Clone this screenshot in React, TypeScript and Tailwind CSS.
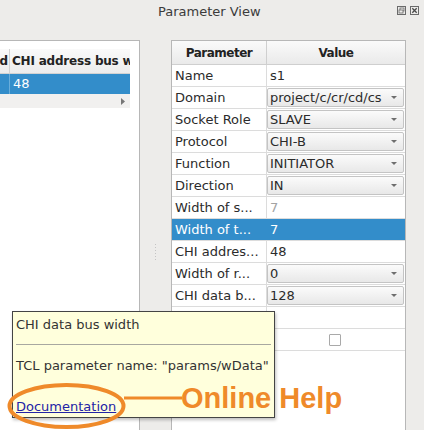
import React from 'react';

type Row = {
  name: string;
  value: string;
  combo?: boolean;
  disabled?: boolean;
  selected?: boolean;
  check?: boolean;
};

const rows: Row[] = [
  { name: 'Name', value: 's1' },
  { name: 'Domain', value: 'project/c/cr/cd/cs', combo: true },
  { name: 'Socket Role', value: 'SLAVE', combo: true },
  { name: 'Protocol', value: 'CHI-B', combo: true },
  { name: 'Function', value: 'INITIATOR', combo: true },
  { name: 'Direction', value: 'IN', combo: true },
  { name: 'Width of s...', value: '7', disabled: true },
  { name: 'Width of t...', value: '7', selected: true },
  { name: 'CHI addres...', value: '48' },
  { name: 'Width of r...', value: '0', combo: true },
  { name: 'CHI data b...', value: '128', combo: true },
  { name: '', value: '' },
  { name: '', value: '', check: true },
];

function DownArrow() {
  return (
    <svg width="6" height="3" viewBox="0 0 6 3" className="shrink-0">
      <path d="M0 0 L6 0 L3 3 Z" fill="#6e6e6e" />
    </svg>
  );
}

function ValueCell({ row }: { row: Row }) {
  if (row.combo) {
    return (
      <div className="flex h-full items-center py-[1px] pr-[1px]">
        <div className="flex h-full w-full items-center justify-between rounded-[2px] border border-[#c4c4c4] bg-gradient-to-b from-[#fbfbfb] to-[#e8e8e8] pl-[2px] pr-[6px]">
          <span className="whitespace-nowrap">{row.value}</span>
          <DownArrow />
        </div>
      </div>
    );
  }
  if (row.check) {
    return (
      <div className="flex h-full items-center justify-center pr-[2px]">
        <div className="h-[12px] w-[12px] rounded-[1px] border border-[#a9a9a9] bg-white" />
      </div>
    );
  }
  return (
    <div className={`flex h-full items-center pl-[3px] ${row.disabled ? 'text-[#a3a3a3]' : ''}`}>
      {row.value}
    </div>
  );
}

export default function App() {
  return (
    <div className="relative h-[430px] w-[424px] overflow-hidden bg-[#edecea] font-['DejaVu_Sans',sans-serif] text-[13px] text-[#2b2b2b]">
      {/* title bar */}
      <div className="flex h-[40px] items-start pt-[4px]">
        <div className="ml-[158px] leading-[16px] text-[#3b3b3b]">Parameter View</div>
        <div className="ml-auto mr-[5px] mt-[2px] flex gap-[4px]">
          <svg width="9" height="9" viewBox="0 0 9 9">
            <rect x="0.5" y="0.5" width="8" height="8" fill="none" stroke="#6a6a6a" />
            <rect x="3" y="2" width="4" height="3" fill="none" stroke="#6a6a6a" strokeWidth="0.8" />
            <rect x="2" y="4" width="4" height="3" fill="#edecea" stroke="#6a6a6a" strokeWidth="0.8" />
          </svg>
          <svg width="9" height="9" viewBox="0 0 9 9">
            <rect x="0.5" y="0.5" width="8" height="8" fill="none" stroke="#6a6a6a" />
            <path d="M2.3 2.3 L6.7 6.7 M6.7 2.3 L2.3 6.7" stroke="#4a4a4a" strokeWidth="1.3" />
          </svg>
        </div>
      </div>

      <div className="flex h-[390px]">
        {/* left panel */}
        <div className="w-[140px] border-t border-r border-[#b7b7b7] bg-white pt-[8px]">
          <div className="w-[130px] overflow-hidden">
            <div className="flex h-[25px] border-b border-[#d2d2d2] bg-gradient-to-b from-[#fafafa] to-[#ececec] font-bold text-[12px] tracking-[-0.2px] text-[#222]">
              <div className="flex w-[10px] shrink-0 items-center justify-end overflow-hidden border-r border-[#d2d2d2] pr-[1px]">d</div>
              <div className="flex items-center whitespace-nowrap pl-[2px]">CHI address bus width</div>
            </div>
            <div className="flex h-[20px] bg-[#338dca] text-white">
              <div className="w-[10px] shrink-0 border-r border-[#6aaedb]" />
              <div className="flex items-center pl-[3px]">48</div>
            </div>
            <div className="flex h-[14px] items-center justify-end bg-[#f1f0ef] pr-[5px]">
              <svg width="4" height="7" viewBox="0 0 4 7">
                <path d="M0 0 L4 3.5 L0 7 Z" fill="#777" />
              </svg>
            </div>
          </div>
        </div>

        {/* splitter */}
        <div className="flex w-[31px] flex-col items-center gap-[2px] pt-[204px]">
          {Array.from({ length: 6 }).map((_, i) => (
            <div key={i} className="h-[1px] w-[1px] bg-[#c4c4c4]" />
          ))}
        </div>

        {/* right panel */}
        <div className="w-[235px] border-t border-x border-[#b7b7b7] bg-white">
          <div className="flex h-[24px] border-b border-[#cfcfcf] bg-gradient-to-b from-[#fafafa] to-[#eaeaea] font-bold text-[12px] tracking-[-0.5px] text-[#222]">
            <div className="flex w-[95px] items-center justify-center border-r border-[#cfcfcf]">Parameter</div>
            <div className="flex flex-1 items-center justify-center">Value</div>
          </div>
          {rows.map((row, i) => (
            <div
              key={i}
              className={`flex h-[22px] border-b border-[#dcdcdc] ${row.selected ? 'bg-[#338dca] text-white' : ''}`}
            >
              <div className={`flex w-[95px] items-center whitespace-nowrap border-r pl-[3px] ${row.selected ? 'border-[#338dca]' : 'border-[#dcdcdc]'}`}>
                {row.name}
              </div>
              <div className="flex-1">
                <ValueCell row={row} />
              </div>
            </div>
          ))}
        </div>
      </div>

      {/* tooltip */}
      <div className="absolute left-[12px] top-[311px] h-[107px] w-[263px] border border-[#444] bg-[#ffffdc] px-[3px] pt-[5px] text-[#333] shadow-[1px_2px_3px_rgba(0,0,0,0.25)]">
        <div className="leading-[16px]">CHI data bus width</div>
        <div className="mt-[11px] h-[1px] bg-[#a8a8a0]" />
        <div className="mt-[13px] whitespace-nowrap leading-[16px]">TCL parameter name: "params/wData"</div>
        <div className="mt-[25px] leading-[16px] text-[#2323a6] underline">Documentation</div>
      </div>

      {/* annotation */}
      <svg className="pointer-events-none absolute left-0 top-0" width="424" height="430" viewBox="0 0 424 430">
        <ellipse cx="66.5" cy="406" rx="57" ry="21" fill="none" stroke="#ef8a2a" strokeWidth="4" />
        <line x1="124" y1="398" x2="182" y2="398" stroke="#ef8a2a" strokeWidth="3" />
      </svg>
      <div className="absolute left-[181px] top-[384px] whitespace-nowrap font-['Liberation_Sans',sans-serif] text-[29px] font-bold leading-[29px] text-[#ef8a2a]">
        Online Help
      </div>
    </div>
  );
}
